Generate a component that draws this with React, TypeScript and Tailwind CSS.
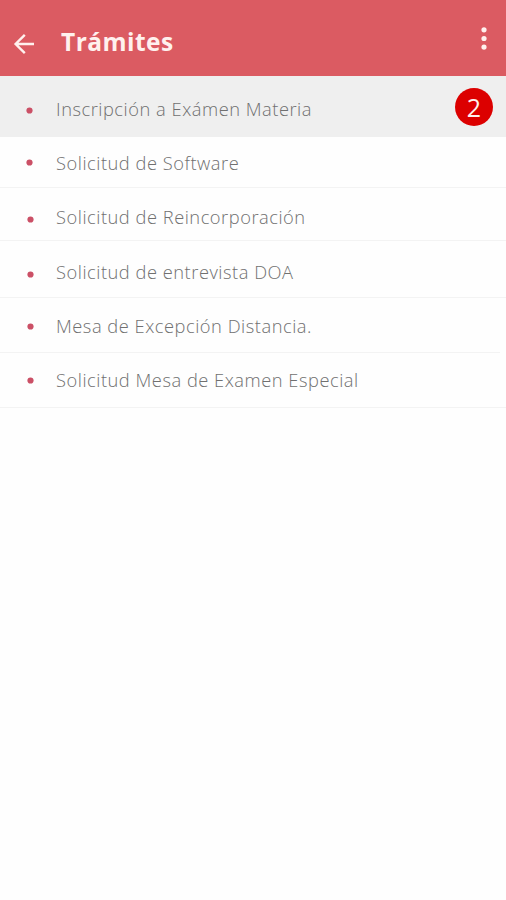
import clsx from 'clsx';

interface Tramite {
    label: string;
    rowClass: string;
    textClass: string;
    dotClass: string;
    badge?: number;
}

const TRAMITES: Tramite[] = [
    {
        label: 'Inscripción a Exámen Materia',
        rowClass: 'h-[61px] bg-[#efefef]',
        textClass: 'mt-5',
        dotClass: 'mt-[31px] ml-[26px] mr-[23px]',
        badge: 2,
    },
    {
        label: 'Solicitud de Software',
        rowClass: 'h-[51px] border-b',
        textClass: 'mt-[13px]',
        dotClass: 'mt-[22px] ml-[26px] mr-[23px]',
    },
    {
        label: 'Solicitud de Reincorporación',
        rowClass: 'h-[53px] border-b',
        textClass: 'mt-4',
        dotClass: 'mt-7 ml-[27px] mr-[22px]',
    },
    {
        label: 'Solicitud de entrevista DOA',
        rowClass: 'h-[57px] border-b',
        textClass: 'mt-[18px]',
        dotClass: 'mt-[30px] ml-[27px] mr-[22px]',
    },
    {
        label: 'Mesa de Excepción Distancia.',
        rowClass: 'h-[55px] mr-1.5 border-b',
        textClass: 'mt-[15px]',
        dotClass: 'mt-[25px] ml-[27px] mr-[22px]',
    },
    {
        label: 'Solicitud Mesa de Examen Especial',
        rowClass: 'h-[55px] border-b',
        textClass: 'mt-3.5',
        dotClass: 'mt-6 ml-[27px] mr-[22px]',
    },
];

function Header() {
    return (
        <header className="flex h-[76px] items-start bg-[#db5b62] text-[#fff1ee]">
            <svg
                className="mt-[33px] ml-3 h-[22px] w-6 shrink-0"
                viewBox="0 0 24 22"
                fill="none"
                stroke="currentColor"
                strokeWidth="2.4"
            >
                <path d="M22 11H3.5M12.8 1.8L3.6 11L12.8 20.2" />
            </svg>
            <h1 className="mt-[25px] ml-[25px] text-[24.5px] leading-[34px] font-bold tracking-[0.45px]">Trámites</h1>
            <svg className="mt-[26px] mr-[17px] ml-auto h-6 w-[10px]" viewBox="0 0 10 24" fill="currentColor">
                <circle cx="5" cy="3.8" r="2.6" />
                <circle cx="5" cy="12.5" r="2.6" />
                <circle cx="5" cy="21.1" r="2.6" />
            </svg>
        </header>
    );
}

function Row({ label, rowClass, textClass, dotClass, badge }: Tramite) {
    return (
        <li className={clsx('flex items-start border-[#f3f3f3]', rowClass)}>
            <svg className={clsx('size-[7px] shrink-0', dotClass)} viewBox="0 0 7 7" fill="#cb5066">
                <circle cx="3.5" cy="3.5" r="3.1" />
            </svg>
            <span
                className={clsx(
                    'text-[18.3px] leading-[26px] font-light tracking-[0.52px] whitespace-nowrap text-[#707070]',
                    textClass
                )}
            >
                {label}
            </span>
            {badge && (
                <span className="mt-3 mr-[13px] ml-auto flex size-[38px] items-center justify-center rounded-full bg-[#dc0000] text-[25px] leading-none font-medium text-[#fff0ee]">
                    {badge}
                </span>
            )}
        </li>
    );
}

export default function App() {
    return (
        <div className="min-h-screen bg-[#fefefe] font-['Open_Sans',sans-serif]">
            <Header />
            <ul>
                {TRAMITES.map((t) => (
                    <Row key={t.label} {...t} />
                ))}
            </ul>
        </div>
    );
}
